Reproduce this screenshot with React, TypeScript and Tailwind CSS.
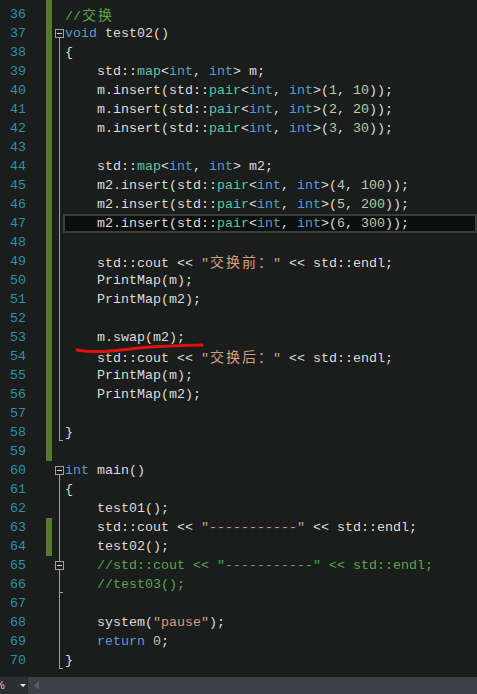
import React from "react";

type Tok = [string, string];

const D = "text-[#dcdcdc]";
const K = "text-[#569cd6]";
const T = "text-[#4ec9b0]";
const N = "text-[#b5cea8]";
const S = "text-[#d69d85]";
const C = "text-[#57a64a]";

type Fold = "none" | "start" | "line" | "end" | "startInLine" | "lineTick";

interface Line {
  n: number;
  toks: Tok[];
  green?: boolean;
  fold: Fold;
  current?: boolean;
}

const insert = (v: string, a: string, b: string): Tok[] => [
  [`    ${v}.insert(std::`, D],
  ["pair", T],
  ["<", D],
  ["int", K],
  [", ", D],
  ["int", K],
  [">(", D],
  [a, N],
  [", ", D],
  [b, N],
  ["));", D],
];

const mapDecl = (v: string): Tok[] => [
  ["    std::", D],
  ["map", T],
  ["<", D],
  ["int", K],
  [", ", D],
  ["int", K],
  [`> ${v};`, D],
];

const lines: Line[] = [
  { n: 35, toks: [], green: true, fold: "none" },
  { n: 36, toks: [["//交换", C]], green: true, fold: "none" },
  { n: 37, toks: [["void", K], [" test02()", D]], green: true, fold: "start" },
  { n: 38, toks: [["{", D]], green: true, fold: "line" },
  { n: 39, toks: mapDecl("m"), green: true, fold: "line" },
  { n: 40, toks: insert("m", "1", "10"), green: true, fold: "line" },
  { n: 41, toks: insert("m", "2", "20"), green: true, fold: "line" },
  { n: 42, toks: insert("m", "3", "30"), green: true, fold: "line" },
  { n: 43, toks: [], green: true, fold: "line" },
  { n: 44, toks: mapDecl("m2"), green: true, fold: "line" },
  { n: 45, toks: insert("m2", "4", "100"), green: true, fold: "line" },
  { n: 46, toks: insert("m2", "5", "200"), green: true, fold: "line" },
  { n: 47, toks: insert("m2", "6", "300"), green: true, fold: "line", current: true },
  { n: 48, toks: [], green: true, fold: "line" },
  { n: 49, toks: [["    std::cout << ", D], ['"交换前："', S], [" << std::endl;", D]], green: true, fold: "line" },
  { n: 50, toks: [["    PrintMap(m);", D]], green: true, fold: "line" },
  { n: 51, toks: [["    PrintMap(m2);", D]], green: true, fold: "line" },
  { n: 52, toks: [], green: true, fold: "line" },
  { n: 53, toks: [["    m.swap(m2);", D]], green: true, fold: "line" },
  { n: 54, toks: [["    std::cout << ", D], ['"交换后："', S], [" << std::endl;", D]], green: true, fold: "line" },
  { n: 55, toks: [["    PrintMap(m);", D]], green: true, fold: "line" },
  { n: 56, toks: [["    PrintMap(m2);", D]], green: true, fold: "line" },
  { n: 57, toks: [], green: true, fold: "line" },
  { n: 58, toks: [["}", D]], green: true, fold: "end" },
  { n: 59, toks: [], green: true, fold: "none" },
  { n: 60, toks: [["int", K], [" main()", D]], fold: "start" },
  { n: 61, toks: [["{", D]], fold: "line" },
  { n: 62, toks: [["    test01();", D]], fold: "line" },
  { n: 63, toks: [["    std::cout << ", D], ['"-----------"', S], [" << std::endl;", D]], green: true, fold: "line" },
  { n: 64, toks: [["    test02();", D]], green: true, fold: "line" },
  { n: 65, toks: [["    ", D], ['//std::cout << "-----------" << std::endl;', C]], fold: "startInLine" },
  { n: 66, toks: [["    ", D], ["//test03();", C]], fold: "lineTick" },
  { n: 67, toks: [], fold: "line" },
  { n: 68, toks: [["    system(", D], ['"pause"', S], [");", D]], fold: "line" },
  { n: 69, toks: [["    ", D], ["return", K], [" ", D], ["0", N], [";", D]], fold: "line" },
  { n: 70, toks: [["}", D]], fold: "end" },
];

const isCJK = (ch: string) => /[\u3000-\u9fff\uff00-\uffef]/.test(ch);

function renderText(text: string, cls: string, key: string) {
  const parts: React.ReactNode[] = [];
  let buf = "";
  let i = 0;
  const flush = () => {
    if (buf) {
      parts.push(
        <span key={`${key}-a${i++}`} className={cls}>
          {buf}
        </span>
      );
      buf = "";
    }
  };
  for (const ch of text) {
    if (isCJK(ch)) {
      flush();
      parts.push(
        <span
          key={`${key}-c${i++}`}
          className={`${cls} inline-block w-[16px] text-center text-[14px] font-['Noto_Sans_CJK_SC',sans-serif]`}
        >
          {ch}
        </span>
      );
    } else {
      buf += ch;
    }
  }
  flush();
  return parts;
}

function FoldCell({ fold }: { fold: Fold }) {
  return (
    <div className="relative w-[11px] h-full shrink-0">
      {(fold === "line" || fold === "startInLine" || fold === "lineTick") && (
        <div className="absolute left-[7px] top-0 bottom-0 w-px bg-[#a0a0a0]" />
      )}
      {fold === "start" && (
        <div className="absolute left-[7px] top-[13px] bottom-0 w-px bg-[#a0a0a0]" />
      )}
      {fold === "end" && (
        <>
          <div className="absolute left-[7px] top-0 h-[18px] w-px bg-[#a0a0a0]" />
          <div className="absolute left-[7px] top-[17px] h-px w-[4px] bg-[#a0a0a0]" />
        </>
      )}
      {fold === "lineTick" && (
        <div className="absolute left-[7px] top-[17px] h-px w-[4px] bg-[#a0a0a0]" />
      )}
      {(fold === "start" || fold === "startInLine") && (
        <div className="absolute left-[3px] top-[5px] w-[9px] h-[9px] border border-[#a0a0a0] bg-[#1a1d1b] flex items-center justify-center">
          <div className="w-[5px] h-px bg-[#d0d0d0]" />
        </div>
      )}
    </div>
  );
}

export default function App() {
  return (
    <div className="w-[477px] h-[694px] overflow-hidden bg-[#1a1d1b] flex flex-col font-['Liberation_Mono',monospace] text-[13.333px]">
      <div className="relative flex-1 overflow-hidden">
        <div className="-mt-[14px] flex flex-col">
          {lines.map((l) => (
            <div key={l.n} className="flex h-[19px] items-stretch leading-[19px]">
              <div className="w-[26px] shrink-0 text-right text-[#2b91af]">{l.n}</div>
              <div className="w-[20px] shrink-0" />
              <div className={`w-[6px] shrink-0 ${l.green ? "bg-[#57782f]" : ""}`} />
              <FoldCell fold={l.fold} />
              {l.current ? (
                <div className="flex-1 min-w-0 whitespace-pre border-2 border-[#3c3e3d] bg-[#0c0f0d] leading-[15px] overflow-hidden">
                  {l.toks.map((t, i) => renderText(t[0], t[1], `${l.n}-${i}`))}
                </div>
              ) : (
                <div className="flex-1 min-w-0 whitespace-pre pl-[2px] overflow-hidden">
                  {l.toks.map((t, i) => renderText(t[0], t[1], `${l.n}-${i}`))}
                </div>
              )}
            </div>
          ))}
        </div>
        <svg
          className="absolute left-0 top-0 pointer-events-none"
          width="477"
          height="677"
          viewBox="0 0 477 677"
        >
          <path
            d="M77 350 C 88 352, 98 352, 110 351 C 125 350, 135 348, 150 347 C 170 346, 190 345, 202 345"
            stroke="#e0120f"
            strokeWidth="3"
            fill="none"
            strokeLinecap="round"
          />
        </svg>
      </div>
      <div className="h-[17px] shrink-0 flex bg-[#3c3f48]">
        <div className="w-[28px] shrink-0 bg-[#2d2e33] border-r border-[#26272b] relative overflow-hidden flex items-center">
          <span className="absolute -left-[5px] text-[11px] text-[#d0d0d0] leading-[17px] font-['Liberation_Sans',sans-serif]">%</span>
          <svg className="absolute left-[20px] top-[7px]" width="6" height="4" viewBox="0 0 6 4">
            <path d="M0 0 L6 0 L3 3 Z" fill="#f0f0f0" />
          </svg>
        </div>
        <div className="flex items-center pl-[6px]">
          <svg width="5" height="9" viewBox="0 0 5 9">
            <path d="M5 0 L0 4.5 L5 9 Z" fill="#5c5f68" />
          </svg>
        </div>
      </div>
    </div>
  );
}
